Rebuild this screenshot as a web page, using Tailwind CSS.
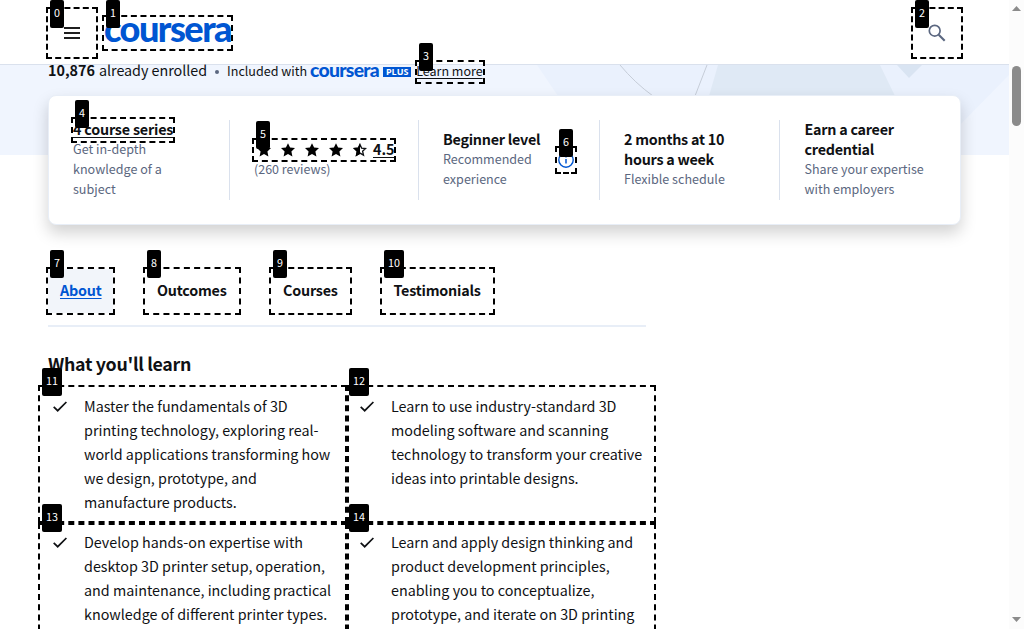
<!DOCTYPE html>
<html lang="en">
<head>
<meta charset="utf-8">
<title>Coursera</title>
<script src="https://cdn.jsdelivr.net/npm/@tailwindcss/browser@4"></script>
</head>
<body class="relative h-[629px] w-[1024px] overflow-hidden bg-white font-['Noto_Sans_CJK_SC','Noto_Sans',sans-serif] text-[14.34px] text-[#0f1114]">
<svg class="hidden">
  <symbol id="star" viewBox="0 0 14 14"><path d="M7 .2l2.100 4.400 4.900.5-3.600 3.400 1 5L7 11.100l-4.400 2.400 1-5L0 5.100l4.900-.5z"/></symbol>
  <symbol id="check" viewBox="0 0 14 11"><path d="M.7 5.800l4 3.900L13.400 1" fill="none" stroke="#0f1114" stroke-width="1.700"/></symbol>
</svg>
<div class="flex h-full">
  <div class="h-full w-[1009px] overflow-hidden">
    <header class="flex h-[65px] items-center border-b border-[#dae1ed] bg-white pl-16">
      <svg class="mt-[2px] h-3 w-4 shrink-0" viewBox="0 0 16 12"><path d="M0 1h16M0 6h16M0 11h16" stroke="#1f1f1f" stroke-width="1.800"/></svg>
      <svg class="ml-6 h-9 w-[129px] overflow-visible" viewBox="0 0 129 36"><text x="0" y="28" textLength="127" lengthAdjust="spacingAndGlyphs" letter-spacing="-1.500" font-family="Lato" font-weight="900" font-size="35.500" fill="#0056d2">coursera</text></svg>
      <svg class="ml-auto mr-[63px] mt-[2px] h-[18px] w-[18px]" viewBox="0 0 18 18" fill="none" stroke="#5b6780"><circle cx="6.700" cy="6.700" r="5.400" stroke-width="1.700"/><path d="M10.700 10.700l6 6" stroke-width="2.100"/></svg>
    </header>
    <section class="relative h-[90px] bg-[#f0f5fe]">
      <svg class="absolute inset-0 h-[90px] w-[1009px]" viewBox="0 0 1009 90">
        <path d="M537 0H1009V10L955 65V90H580L558 31z" fill="#eaf1fd"/>
        <path d="M718 0H880L895 31H709z" fill="#dfe9f5"/><path d="M897 0H922L909 13z" fill="#d9e4f2"/>
        <path d="M620 0Q635 18 653 31M707 0L695 31" fill="none" stroke="#c6cdd8"/>
      </svg>
      <div class="relative -top-px flex h-[13px] items-center whitespace-nowrap pl-12">
        <b class="-mt-px">10,876</b><span class="-mt-px ml-1 tracking-[-0.03px]">already enrolled</span>
        <span class="ml-2 mt-[2px] h-1 w-1 rounded-full bg-[#5b6780]"></span>
        <span class="ml-2 mt-px text-[12.55px]">Included with</span>
        <svg class="ml-[3px] mt-[3px] h-5 w-[70px] overflow-visible" viewBox="0 0 70 20"><text x="0" y="15" textLength="69" lengthAdjust="spacingAndGlyphs" letter-spacing="-.7" font-family="Lato" font-weight="900" font-size="19" fill="#0056d2">coursera</text></svg>
        <span class="ml-[3px] mt-[2px] flex h-[10px] w-7 items-center justify-center bg-[#0056d2] font-['Open_Sans'] text-[9px] font-bold text-white">PLUS</span>
        <span class="ml-[5px] mt-px text-[12.5px] underline underline-offset-2">Learn more</span>
      </div>
      <div class="relative ml-12 mt-[17px] flex h-[130px] w-[913px] items-center rounded-lg border border-[#e8eef7] bg-white pl-6 leading-5 whitespace-nowrap shadow-[0_8px_16px_rgba(0,0,0,0.18)]">
        <div class="h-20 w-[157px] border-r border-[#dae1ed]">
          <div class="-mt-px"><p class="font-bold tracking-[-0.2px] underline underline-offset-2">4 course series</p>
          <p class="text-[12.55px] text-[#5b6780]">Get in-depth<br>knowledge of a<br>subject</p></div>
        </div>
        <div class="flex h-20 w-[189px] flex-col justify-center border-r border-[#dae1ed] pb-[2px] pl-6">
          <div class="flex items-center gap-[10px] pl-[3px]">
            <svg class="mt-px h-[14px] w-[14px]"><use href="#star"/></svg>
            <svg class="mt-px h-[14px] w-[14px]"><use href="#star"/></svg>
            <svg class="mt-px h-[14px] w-[14px]"><use href="#star"/></svg>
            <svg class="mt-px h-[14px] w-[14px]"><use href="#star"/></svg>
            <svg class="mt-px h-[14px] w-[14px]" viewBox="0 0 14 14"><path d="M7 1.500l1.600 3.600 4 .4-3 2.700 .9 3.900L7 10.100l-3.500 2 .9-3.900-3-2.700 4-.4z" fill="none" stroke="#0f1114" stroke-width="1.300"/><path d="M7 .2v10.900l-4.400 2.400 1-5L0 5.100l4.900-.5z"/></svg>
            <span class="-ml-1 font-bold underline underline-offset-2">4.5</span>
          </div>
          <p class="text-[12.5px] text-[#5b6780]">(260 reviews)</p>
        </div>
        <div class="flex h-20 w-[181px] items-center border-r border-[#dae1ed] pl-6">
          <div class="-mt-[2px] w-[115px]"><p class="font-bold tracking-[-0.25px]">Beginner level</p><p class="text-[12.55px] text-[#5b6780]">Recommended<br>experience</p></div>
          <svg class="h-4 w-4" viewBox="0 0 16 16"><circle cx="8" cy="8" r="7.200" fill="none" stroke="#0056d2" stroke-width="1.400"/><path d="M8 7v4.500M8 4v1.500" stroke="#0056d2" stroke-width="1.500"/></svg>
        </div>
        <div class="flex h-20 w-[180px] flex-col justify-center border-r border-[#dae1ed] pb-[2px] pl-6">
          <p class="font-bold tracking-[-0.25px]">2 months at 10<br>hours a week</p><p class="text-[12.55px] text-[#5b6780]">Flexible schedule</p>
        </div>
        <div class="h-20 pl-[24.5px]">
          <div class="-mt-px"><p class="font-bold tracking-[-0.25px]">Earn a career<br>credential</p><p class="text-[12.5px] text-[#5b6780]">Share your expertise<br>with employers</p></div>
        </div>
      </div>
    </section>
    <nav class="ml-12 mt-[114px] flex h-[58px] w-[598px] items-start border-b-2 border-[#e8eef7] font-bold leading-[42px] tracking-[-0.2px]">
      <a class="h-11 w-[65px] bg-[#f2f5fa] pl-3 text-[#0056d2] underline underline-offset-2">About</a>
      <a class="ml-8 w-[94px] pl-3">Outcomes</a>
      <a class="ml-8 w-[79px] pl-3">Courses</a>
      <a class="ml-8 w-[111px] pl-[11.5px]">Testimonials</a>
    </nav>
    <main class="ml-12 leading-6 whitespace-nowrap">
      <h2 class="mt-[24px] text-[17.8px] font-bold tracking-[-0.3px]">What you'll learn</h2>
      <ul class="mt-[19px] grid grid-cols-[307px_307px] gap-y-4">
        <li class="flex"><svg class="ml-[5px] mr-[17px] mt-[7px] h-[11px] w-[14px]"><use href="#check"/></svg><p>Master the fundamentals of 3D<br>printing technology, exploring real-<br>world applications transforming how<br>we design, prototype, and<br>manufacture products.</p></li>
        <li class="flex"><svg class="ml-[5px] mr-[17px] mt-[7px] h-[11px] w-[14px]"><use href="#check"/></svg><p>Learn to use industry-standard 3D<br>modeling software and scanning<br>technology to transform your creative<br>ideas into printable designs.</p></li>
        <li class="flex"><svg class="ml-[5px] mr-[17px] mt-[7px] h-[11px] w-[14px]"><use href="#check"/></svg><p>Develop hands-on expertise with<br>desktop 3D printer setup, operation,<br>and maintenance, including practical<br>knowledge of different printer types.</p></li>
        <li class="flex"><svg class="ml-[5px] mr-[17px] mt-[7px] h-[11px] w-[14px]"><use href="#check"/></svg><p>Learn and apply design thinking and<br>product development principles,<br>enabling you to conceptualize,<br>prototype, and iterate on 3D printing</p></li>
      </ul>
    </main>
  </div>
  <aside class="flex h-full w-[15px] flex-col items-center bg-[#fcfcfc]">
    <svg class="mt-[6px] h-[5px] w-[9px]" viewBox="0 0 9 5"><path d="M0 5L4.500 0 9 5z" fill="#8b8b8b"/></svg>
    <div class="mt-[55px] h-[60px] w-[9px] rounded-full bg-[#8b8b8b]"></div>
    <svg class="mb-[7px] mt-auto h-[5px] w-[9px]" viewBox="0 0 9 5"><path d="M0 0L4.500 5 9 0z" fill="#8b8b8b"/></svg>
  </aside>
</div>
<!-- numbered element markers -->
<div class="absolute inset-0 overflow-hidden text-[10.75px] leading-5 text-white">
  <div class="absolute left-[46px] top-[7px] h-[52px] w-[52px] border-2 border-dashed border-black"></div>
  <div class="absolute left-[102px] top-[15px] h-[36px] w-[131px] border-2 border-dashed border-black"></div>
  <div class="absolute left-[911px] top-[7px] h-[52px] w-[52px] border-2 border-dashed border-black"></div>
  <div class="absolute left-[415px] top-[60px] h-[24px] w-[70px] border-2 border-dashed border-black"></div>
  <div class="absolute left-[71px] top-[117px] h-[26px] w-[104px] border-2 border-dashed border-black"></div>
  <div class="absolute left-[252px] top-[138px] h-[24px] w-[144px] border-2 border-dashed border-black"></div>
  <div class="absolute left-[555px] top-[146px] h-[28px] w-[22px] border-2 border-dashed border-black"></div>
  <div class="absolute left-[46px] top-[267px] h-[48px] w-[69px] border-2 border-dashed border-black"></div>
  <div class="absolute left-[143px] top-[267px] h-[48px] w-[98px] border-2 border-dashed border-black"></div>
  <div class="absolute left-[269px] top-[267px] h-[48px] w-[83px] border-2 border-dashed border-black"></div>
  <div class="absolute left-[380px] top-[267px] h-[48px] w-[115px] border-2 border-dashed border-black"></div>
  <div class="absolute left-[38px] top-[385px] h-[138px] w-[309px] border-2 border-dashed border-black"></div>
  <div class="absolute left-[347px] top-[385px] h-[138px] w-[309px] border-2 border-dashed border-black"></div>
  <div class="absolute left-[38px] top-[523px] h-[138px] w-[309px] border-2 border-dashed border-black"></div>
  <div class="absolute left-[347px] top-[523px] h-[138px] w-[309px] border-2 border-dashed border-black"></div>
  <span class="absolute left-[50px] top-0 rounded-xs bg-black p-1 pt-[3px] pb-[5px]">0</span>
  <span class="absolute left-[106px] top-0 rounded-xs bg-black p-1 pt-[3px] pb-[5px]">1</span>
  <span class="absolute left-[915px] top-0 rounded-xs bg-black p-1 pt-[3px] pb-[5px]">2</span>
  <span class="absolute left-[419px] top-[43px] rounded-xs bg-black p-1 pt-[3px] pb-[5px]">3</span>
  <span class="absolute left-[75px] top-[100px] rounded-xs bg-black p-1 pt-[3px] pb-[5px]">4</span>
  <span class="absolute left-[256px] top-[121px] rounded-xs bg-black p-1 pt-[3px] pb-[5px]">5</span>
  <span class="absolute left-[559px] top-[129px] rounded-xs bg-black p-1 pt-[3px] pb-[5px]">6</span>
  <span class="absolute left-[50px] top-[250px] rounded-xs bg-black p-1 pt-[3px] pb-[5px]">7</span>
  <span class="absolute left-[147px] top-[250px] rounded-xs bg-black p-1 pt-[3px] pb-[5px]">8</span>
  <span class="absolute left-[273px] top-[250px] rounded-xs bg-black p-1 pt-[3px] pb-[5px]">9</span>
  <span class="absolute left-[384px] top-[250px] rounded-xs bg-black p-1 pt-[3px] pb-[5px]">10</span>
  <span class="absolute left-[42px] top-[368px] rounded-xs bg-black p-1 pt-[3px] pb-[5px]">11</span>
  <span class="absolute left-[349px] top-[368px] rounded-xs bg-black p-1 pt-[3px] pb-[5px]">12</span>
  <span class="absolute left-[42px] top-[504px] rounded-xs bg-black p-1 pt-[3px] pb-[5px]">13</span>
  <span class="absolute left-[349px] top-[504px] rounded-xs bg-black p-1 pt-[3px] pb-[5px]">14</span>
</div>
</body>
</html>
